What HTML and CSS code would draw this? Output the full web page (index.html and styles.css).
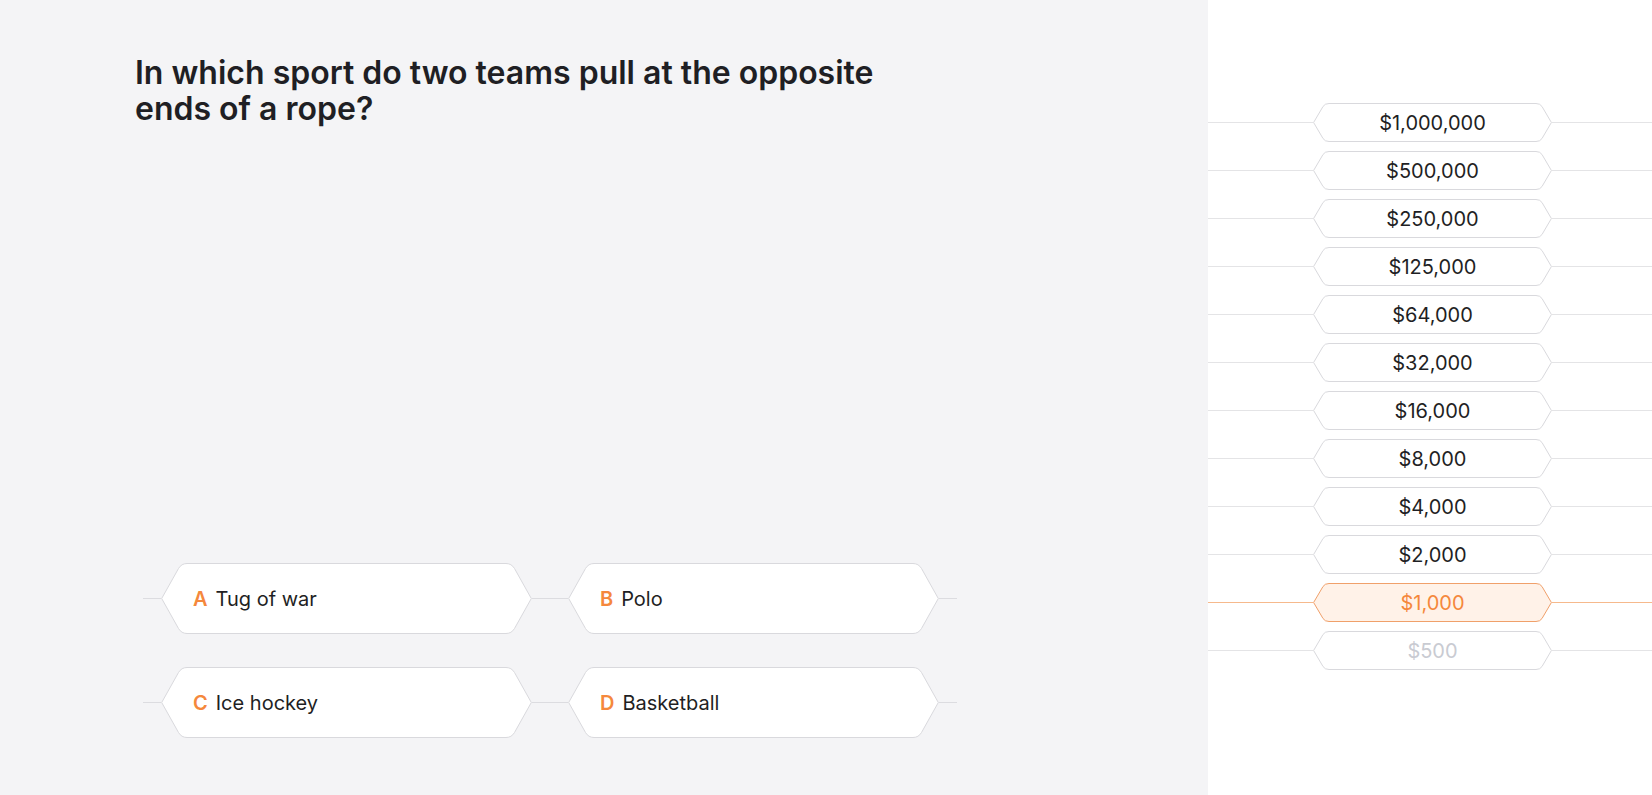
FILE: index.html
```html
<!DOCTYPE html>
<html lang="en">
<head>
<meta charset="utf-8">
<title>Quiz</title>
<link rel="stylesheet" href="styles.css">
</head>
<body>
<div class="app">
  <main class="game">
    <h1 class="question">In which sport do two teams pull at the opposite ends of a rope?</h1>
    <div class="answers">
      <div class="answer-row">
        <span class="aline"></span>
        <button class="answer">
          <svg class="ashape" viewBox="0 0 371 71" width="371" height="71"><path d="M0.7 35.5 L17.5 5.5 Q20.5 0.5 26 0.5 H345 Q350.5 0.5 353.5 5.5 L370.3 35.5 L353.5 65.5 Q350.5 70.5 345 70.5 H26 Q20.5 70.5 17.5 65.5 Z"/></svg>
          <span class="letter">A</span><span class="atext">Tug of war</span>
        </button>
        <span class="aline"></span>
        <span class="aline"></span>
        <button class="answer">
          <svg class="ashape" viewBox="0 0 371 71" width="371" height="71"><path d="M0.7 35.5 L17.5 5.5 Q20.5 0.5 26 0.5 H345 Q350.5 0.5 353.5 5.5 L370.3 35.5 L353.5 65.5 Q350.5 70.5 345 70.5 H26 Q20.5 70.5 17.5 65.5 Z"/></svg>
          <span class="letter">B</span><span class="atext">Polo</span>
        </button>
        <span class="aline"></span>
      </div>
      <div class="answer-row">
        <span class="aline"></span>
        <button class="answer">
          <svg class="ashape" viewBox="0 0 371 71" width="371" height="71"><path d="M0.7 35.5 L17.5 5.5 Q20.5 0.5 26 0.5 H345 Q350.5 0.5 353.5 5.5 L370.3 35.5 L353.5 65.5 Q350.5 70.5 345 70.5 H26 Q20.5 70.5 17.5 65.5 Z"/></svg>
          <span class="letter">C</span><span class="atext">Ice hockey</span>
        </button>
        <span class="aline"></span>
        <span class="aline"></span>
        <button class="answer">
          <svg class="ashape" viewBox="0 0 371 71" width="371" height="71"><path d="M0.7 35.5 L17.5 5.5 Q20.5 0.5 26 0.5 H345 Q350.5 0.5 353.5 5.5 L370.3 35.5 L353.5 65.5 Q350.5 70.5 345 70.5 H26 Q20.5 70.5 17.5 65.5 Z"/></svg>
          <span class="letter">D</span><span class="atext">Basketball</span>
        </button>
        <span class="aline"></span>
      </div>
    </div>
  </main>
  <aside class="ladder">
    <div class="step"><span class="lline"></span><div class="prize"><svg class="pshape" viewBox="0 0 239 39" width="239" height="39"><path d="M0.6 19.5 L10 3.5 Q11.8 0.5 16 0.5 H223 Q227.2 0.5 229 3.5 L238.4 19.5 L229 35.5 Q227.2 38.5 223 38.5 H16 Q11.8 38.5 10 35.5 Z"/></svg><span class="amount">$1,000,000</span></div><span class="lline grow"></span></div>
    <div class="step"><span class="lline"></span><div class="prize"><svg class="pshape" viewBox="0 0 239 39" width="239" height="39"><path d="M0.6 19.5 L10 3.5 Q11.8 0.5 16 0.5 H223 Q227.2 0.5 229 3.5 L238.4 19.5 L229 35.5 Q227.2 38.5 223 38.5 H16 Q11.8 38.5 10 35.5 Z"/></svg><span class="amount">$500,000</span></div><span class="lline grow"></span></div>
    <div class="step"><span class="lline"></span><div class="prize"><svg class="pshape" viewBox="0 0 239 39" width="239" height="39"><path d="M0.6 19.5 L10 3.5 Q11.8 0.5 16 0.5 H223 Q227.2 0.5 229 3.5 L238.4 19.5 L229 35.5 Q227.2 38.5 223 38.5 H16 Q11.8 38.5 10 35.5 Z"/></svg><span class="amount">$250,000</span></div><span class="lline grow"></span></div>
    <div class="step"><span class="lline"></span><div class="prize"><svg class="pshape" viewBox="0 0 239 39" width="239" height="39"><path d="M0.6 19.5 L10 3.5 Q11.8 0.5 16 0.5 H223 Q227.2 0.5 229 3.5 L238.4 19.5 L229 35.5 Q227.2 38.5 223 38.5 H16 Q11.8 38.5 10 35.5 Z"/></svg><span class="amount">$125,000</span></div><span class="lline grow"></span></div>
    <div class="step"><span class="lline"></span><div class="prize"><svg class="pshape" viewBox="0 0 239 39" width="239" height="39"><path d="M0.6 19.5 L10 3.5 Q11.8 0.5 16 0.5 H223 Q227.2 0.5 229 3.5 L238.4 19.5 L229 35.5 Q227.2 38.5 223 38.5 H16 Q11.8 38.5 10 35.5 Z"/></svg><span class="amount">$64,000</span></div><span class="lline grow"></span></div>
    <div class="step"><span class="lline"></span><div class="prize"><svg class="pshape" viewBox="0 0 239 39" width="239" height="39"><path d="M0.6 19.5 L10 3.5 Q11.8 0.5 16 0.5 H223 Q227.2 0.5 229 3.5 L238.4 19.5 L229 35.5 Q227.2 38.5 223 38.5 H16 Q11.8 38.5 10 35.5 Z"/></svg><span class="amount">$32,000</span></div><span class="lline grow"></span></div>
    <div class="step"><span class="lline"></span><div class="prize"><svg class="pshape" viewBox="0 0 239 39" width="239" height="39"><path d="M0.6 19.5 L10 3.5 Q11.8 0.5 16 0.5 H223 Q227.2 0.5 229 3.5 L238.4 19.5 L229 35.5 Q227.2 38.5 223 38.5 H16 Q11.8 38.5 10 35.5 Z"/></svg><span class="amount">$16,000</span></div><span class="lline grow"></span></div>
    <div class="step"><span class="lline"></span><div class="prize"><svg class="pshape" viewBox="0 0 239 39" width="239" height="39"><path d="M0.6 19.5 L10 3.5 Q11.8 0.5 16 0.5 H223 Q227.2 0.5 229 3.5 L238.4 19.5 L229 35.5 Q227.2 38.5 223 38.5 H16 Q11.8 38.5 10 35.5 Z"/></svg><span class="amount">$8,000</span></div><span class="lline grow"></span></div>
    <div class="step"><span class="lline"></span><div class="prize"><svg class="pshape" viewBox="0 0 239 39" width="239" height="39"><path d="M0.6 19.5 L10 3.5 Q11.8 0.5 16 0.5 H223 Q227.2 0.5 229 3.5 L238.4 19.5 L229 35.5 Q227.2 38.5 223 38.5 H16 Q11.8 38.5 10 35.5 Z"/></svg><span class="amount">$4,000</span></div><span class="lline grow"></span></div>
    <div class="step"><span class="lline"></span><div class="prize"><svg class="pshape" viewBox="0 0 239 39" width="239" height="39"><path d="M0.6 19.5 L10 3.5 Q11.8 0.5 16 0.5 H223 Q227.2 0.5 229 3.5 L238.4 19.5 L229 35.5 Q227.2 38.5 223 38.5 H16 Q11.8 38.5 10 35.5 Z"/></svg><span class="amount">$2,000</span></div><span class="lline grow"></span></div>
    <div class="step current"><span class="lline"></span><div class="prize"><svg class="pshape" viewBox="0 0 239 39" width="239" height="39"><path d="M0.6 19.5 L10 3.5 Q11.8 0.5 16 0.5 H223 Q227.2 0.5 229 3.5 L238.4 19.5 L229 35.5 Q227.2 38.5 223 38.5 H16 Q11.8 38.5 10 35.5 Z"/></svg><span class="amount">$1,000</span></div><span class="lline grow"></span></div>
    <div class="step passed"><span class="lline"></span><div class="prize"><svg class="pshape" viewBox="0 0 239 39" width="239" height="39"><path d="M0.6 19.5 L10 3.5 Q11.8 0.5 16 0.5 H223 Q227.2 0.5 229 3.5 L238.4 19.5 L229 35.5 Q227.2 38.5 223 38.5 H16 Q11.8 38.5 10 35.5 Z"/></svg><span class="amount">$500</span></div><span class="lline grow"></span></div>
  </aside>
</div>
</body>
</html>
```

FILE: styles.css
```css
* { box-sizing: border-box; }
html, body { margin: 0; padding: 0; height: 100%; }
body {
  font-family: Inter, "Noto Sans", "Liberation Sans", sans-serif;
  color: #1f1f24;
}
.app {
  display: flex;
  width: 1652px;
  height: 795px;
  overflow: hidden;
}
.game {
  width: 1208px;
  flex: none;
  background: #f4f4f6;
  display: flex;
  flex-direction: column;
  justify-content: space-between;
  padding: 55px 0 57px 135px;
}
.question {
  margin: 0;
  width: 800px;
  font-size: 32px;
  line-height: 36px;
  font-weight: 600;
  color: #1f1f24;
}
.answers {
  display: flex;
  flex-direction: column;
  gap: 33px;
  margin-left: 8px;
}
.answer-row {
  display: flex;
  align-items: center;
}
.aline {
  width: 18px;
  height: 1px;
  background: #dcdce0;
}
.answer {
  position: relative;
  width: 371px;
  height: 71px;
  border: 0;
  padding: 0 0 0 32px;
  margin: 0;
  background: transparent;
  display: flex;
  align-items: center;
  font-family: inherit;
  font-size: 20px;
  color: #1f1f24;
  text-align: left;
  cursor: pointer;
}
.ashape, .pshape {
  position: absolute;
  left: 0;
  top: 0;
  overflow: visible;
}
.ashape path, .pshape path {
  fill: #ffffff;
  stroke: #d9d9dd;
  stroke-width: 1;
}
.letter, .atext, .amount { position: relative; }
.letter {
  color: #f5883c;
  font-weight: 600;
  margin-right: 8px;
}
.ladder {
  flex: 1;
  background: #ffffff;
  padding-top: 103px;
  display: flex;
  flex-direction: column;
  gap: 9px;
}
.step {
  display: flex;
  align-items: center;
  height: 39px;
}
.lline {
  width: 105px;
  height: 1px;
  background: #e4e4e6;
  flex: none;
}
.lline.grow { flex: 1; width: auto; }
.prize {
  position: relative;
  width: 239px;
  height: 39px;
  flex: none;
  display: flex;
  align-items: center;
  justify-content: center;
  font-size: 20px;
  color: #1f1f24;
}
.step.current .lline { background: #f6b98c; }
.step.current .pshape path { fill: #fff2e8; stroke: #f0a06a; }
.step.current .amount { color: #f5883c; }
.step.passed .amount { color: #c9cbd2; }
```
